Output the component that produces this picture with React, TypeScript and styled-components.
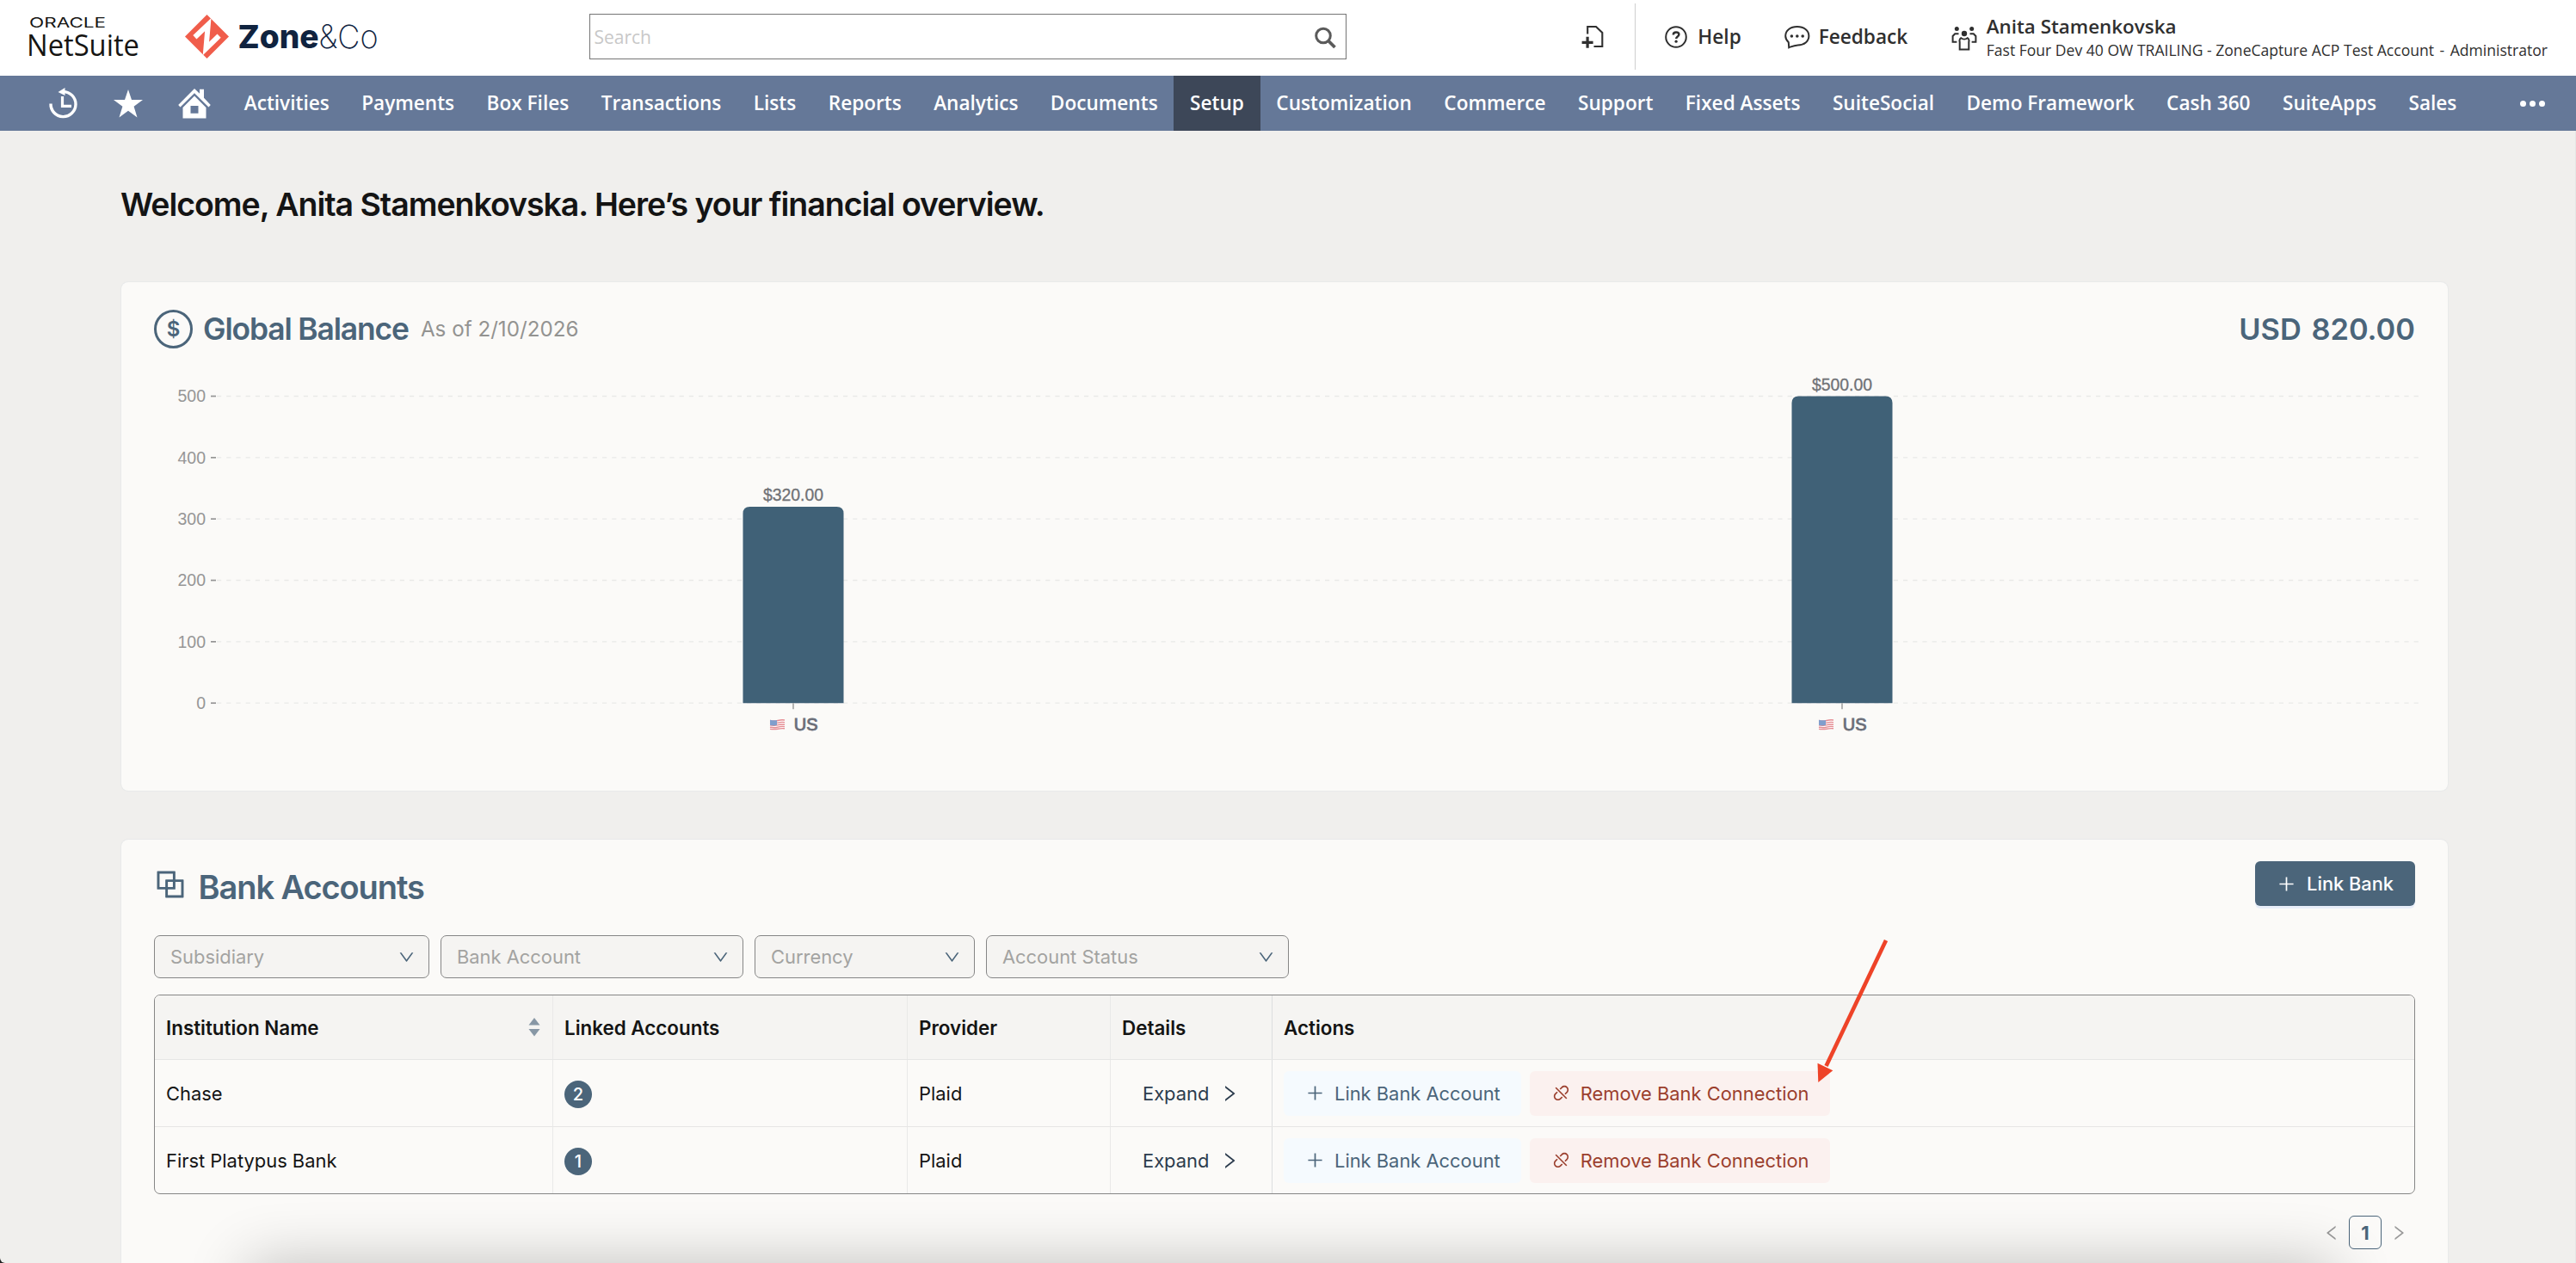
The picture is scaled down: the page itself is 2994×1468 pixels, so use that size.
import styled, { createGlobalStyle } from "styled-components";
import {
  AiOutlineBlock,
  AiOutlineDisconnect,
  AiOutlineDown,
  AiOutlineLeft,
  AiOutlinePlus,
  AiOutlineRight,
} from "react-icons/ai";

const NAV_ITEMS = [
  "Activities",
  "Payments",
  "Box Files",
  "Transactions",
  "Lists",
  "Reports",
  "Analytics",
  "Documents",
  "Setup",
  "Customization",
  "Commerce",
  "Support",
  "Fixed Assets",
  "SuiteSocial",
  "Demo Framework",
  "Cash 360",
  "SuiteApps",
  "Sales",
];

const FILTERS = [
  { label: "Subsidiary", width: 320 },
  { label: "Bank Account", width: 352 },
  { label: "Currency", width: 256 },
  { label: "Account Status", width: 352 },
];

const BALANCES = [
  { country: "US", value: 320 },
  { country: "US", value: 500 },
];

const BANKS = [
  { name: "Chase", accounts: 2, provider: "Plaid" },
  { name: "First Platypus Bank", accounts: 1, provider: "Plaid" },
];

function NetSuiteLogo(): JSX.Element {
  return (
    <svg width="136" height="54" viewBox="0 0 136 54" overflow="visible">
      <text
        x="3"
        y="15.5"
        fontFamily="Inter, sans-serif"
        fontSize="16"
        fontWeight="400"
        textLength="89"
        lengthAdjust="spacingAndGlyphs"
        fill="#161513">
        ORACLE
      </text>
      <text
        x="0"
        y="48.5"
        fontFamily="Open Sans, sans-serif"
        fontSize="35"
        textLength="131"
        lengthAdjust="spacingAndGlyphs"
        fill="#161513">
        NetSuite
      </text>
    </svg>
  );
}

function ZoneLogo(): JSX.Element {
  return (
    <svg width="228" height="54" viewBox="0 0 228 54" overflow="visible">
      <path d="M25.5 1 51 26.5 25.5 52 0 26.5Z" fill="#f05d4b" />
      <path
        d="M11.4 27.2 26.8 12.6 24.4 40.4 39.6 25.6"
        fill="none"
        stroke="#fff"
        strokeWidth="6"
      />
      <text
        x="61.5"
        y="39.5"
        fontFamily="Inter, sans-serif"
        fontSize="37.5"
        fontWeight="800"
        textLength="94"
        lengthAdjust="spacingAndGlyphs"
        fill="#10233f">
        Zone
      </text>
      <text
        x="155.5"
        y="39.5"
        fontFamily="Inter, sans-serif"
        fontSize="37.5"
        fontWeight="200"
        textLength="69"
        lengthAdjust="spacingAndGlyphs"
        fill="#10233f">
        &amp;Co
      </text>
    </svg>
  );
}

function SearchIcon(): JSX.Element {
  return (
    <svg width="26" height="26" viewBox="0 0 26 26" fill="none" stroke="#5a5a5a">
      <circle cx="11" cy="10.5" r="8.3" strokeWidth="3" />
      <path d="m17 16.5 7.5 7.5" strokeWidth="3.8" />
    </svg>
  );
}

function NewRecordIcon(): JSX.Element {
  return (
    <svg width="26" height="28" viewBox="0 0 26 28" fill="none" stroke="#2f2f2f">
      <path d="M7.2 10.5V2H17l7.3 7v16H14.5" strokeWidth="2.1" />
      <path d="M.6 20.3h13M7.1 13.8v13" strokeWidth="3.2" />
    </svg>
  );
}

function HelpIcon(): JSX.Element {
  return (
    <svg width="26" height="26" viewBox="0 0 26 26" fill="none" stroke="#2f2f2f">
      <circle cx="13" cy="13" r="11.8" strokeWidth="2" />
      <path
        d="M9.8 10.4c0-2 1.4-3 3.3-3s3.3 1 3.3 2.7c0 2.6-3.2 2.3-3.2 5"
        strokeWidth="2.5"
      />
      <circle cx="13.1" cy="18.2" r="1.6" fill="#2f2f2f" stroke="none" />
    </svg>
  );
}

function FeedbackIcon(): JSX.Element {
  return (
    <svg width="30" height="28" viewBox="0 0 30 28" fill="none" stroke="#2f2f2f">
      <path
        d="M4.8 20.2C2.4 18 1.2 15.6 1.2 12.8 1.2 6.5 7 2 14.8 2s13.6 4.5 13.600 10.8S23 23.400 15.600 23.400C11.200 23.600 8.500 25 5.200 26.300Z"
        strokeWidth="2"
      />
      <g fill="#2f2f2f" stroke="none">
        <circle cx="8.4" cy="13" r="1.8" />
        <circle cx="14.8" cy="13" r="1.8" />
        <circle cx="21.2" cy="13" r="1.8" />
      </g>
    </svg>
  );
}

function RolesIcon(): JSX.Element {
  return (
    <svg width="30" height="29" viewBox="0 0 30 29" fill="none" stroke="#2f2f2f">
      <g fill="#2f2f2f" stroke="none">
        <circle cx="6.3" cy="3.4" r="2.5" />
        <circle cx="23.7" cy="3.4" r="2.5" />
        <circle cx="15" cy="9" r="3.2" />
      </g>
      <path
        d="M8.5 9.2H4.200L1.600 12v6.800h4.800M21.500 9.200h4.300l2.600 2.800v6.800h-4.800"
        strokeWidth="2"
      />
      <path
        d="M9.7 27.600V18.500c-.6-1.200 0-3.500 1.600-4.300 2 1.600 5.400 1.600 7.400 0 1.600.8 2.200 3.100 1.600 4.300v9.100Z"
        strokeWidth="2"
      />
    </svg>
  );
}

function RecentIcon(): JSX.Element {
  return (
    <svg width="34" height="36" viewBox="0 0 34 36" fill="none" stroke="#fff">
      <path d="M2 18.500A14.500 14.500 0 1 0 16.500 4.600" strokeWidth="3.400" />
      <path d="M10.500 5 18.500 0v9Z" fill="#fff" stroke="none" />
      <path d="M15.500 10v11.300h10.500" strokeWidth="3.200" />
    </svg>
  );
}

function StarIcon(): JSX.Element {
  return (
    <svg width="34" height="33" viewBox="0 0 34 33">
      <path
        d="M17 0l4 12h13L23.6 19.7 27.5 32.5 17 24.8 6.5 32.5l3.9-12.800L0 12h13Z"
        fill="#fff"
      />
    </svg>
  );
}

function HomeIcon(): JSX.Element {
  return (
    <svg width="38" height="35" viewBox="0 0 38 35" fill="#fff">
      <path d="M19 0l6 5.800V.8h5v10L37.800 19l-2.300 2.600L19 5.200 2.500 21.600.2 19Z" />
      <path
        fillRule="evenodd"
        d="M19 8.600 32.500 22v12.500h-27V22ZM14.500 20v8.800h9V20Z"
      />
    </svg>
  );
}

function SortIcon(): JSX.Element {
  return (
    <svg width="14" height="22" viewBox="0 0 14 22" fill="#8797a5">
      <path d="M7 0l6.500 8.500H.5Z" />
      <path d="M7 21.500.5 13h13Z" />
    </svg>
  );
}

// Chart geometry, in the svg's own pixels
const ZERO_Y = 413.2;
const UNIT = 0.7134;
const PLOT_LEFT = 73;
const PLOT_RIGHT = 2632;
const FIRST_BAR = 743;
const BAR_STEP = 1219;
const BAR_WIDTH = 117;

function BalanceChart(): JSX.Element {
  return (
    <ChartSvg width="2640" height="460" viewBox="0 0 2640 460">
      {[0, 100, 200, 300, 400, 500].map((tick) => {
        const y = ZERO_Y - tick * UNIT;
        return (
          <g key={tick}>
            <AxisText x="60" y={y + 6.8} textAnchor="end">
              {tick}
            </AxisText>
            <line x1="66" x2="72" y1={y} y2={y} stroke="#959595" strokeWidth="1.7" />
            <line
              x1={PLOT_LEFT}
              x2={PLOT_RIGHT}
              y1={y}
              y2={y}
              stroke="#e9e9e8"
              strokeWidth="1.3"
              strokeDasharray="5.2 6"
            />
          </g>
        );
      })}
      {BALANCES.map(({ country, value }, i) => {
        const cx = FIRST_BAR + i * BAR_STEP;
        const left = cx - BAR_WIDTH / 2;
        const top = ZERO_Y - value * UNIT;
        return (
          <g key={i}>
            <path
              d={`M${left} ${ZERO_Y}V${top + 8}q0-8 8-8H${left + BAR_WIDTH - 8}q8 0 8 8V${ZERO_Y}Z`}
              fill="#406177"
            />
            <ValueText x={cx} y={top - 6.8} textAnchor="middle">
              ${value.toFixed(2)}
            </ValueText>
            <line
              x1={cx}
              x2={cx}
              y1={ZERO_Y}
              y2={ZERO_Y + 7}
              stroke="#959595"
              strokeWidth="1.4"
            />
            <g transform={`translate(${cx - 27} 432)`} opacity="0.6">
              <path d="M0 .8Q5 2 9 .8T17 .2V11.2Q13 10.8 9 11.6T0 12Z" fill="#fff" />
              <path
                d="M0 1.5Q5 2.6 9 1.5T17 1M0 4.2Q5 5.2 9 4.1T17 3.6M0 6.8Q5 7.8 9 6.7T17 6.2M0 9.2Q5 10.2 9 9.1T17 8.6M0 11.4Q5 12 9 11.2T17 10.8"
                stroke="#d8434f"
                strokeWidth="1.4"
                fill="none"
              />
              <path d="M0 .8Q5 1.8 8 1V7Q4 7.8 0 7Z" fill="#2f62b0" />
            </g>
            <CountryText x={cx + 0.7} y="445.2">
              {country}
            </CountryText>
          </g>
        );
      })}
    </ChartSvg>
  );
}

export default function App(): JSX.Element {
  return (
    <>
      <GlobalStyle />
      <Page>
        <Header>
          <LogoNetSuite>
            <NetSuiteLogo />
          </LogoNetSuite>
          <ZoneLogo />
          <SearchBox>
            <span>Search</span>
            <SearchIcon />
          </SearchBox>
          <HeaderTools>
            <NewRecordIcon />
            <Divider />
            <ToolLink $gap={12}>
              <HelpIcon />
              Help
            </ToolLink>
            <ToolLink $gap={9.5}>
              <FeedbackIcon />
              Feedback
            </ToolLink>
            <User>
              <RolesIcon />
              <div>
                <UserName>Anita Stamenkovska</UserName>
                <UserRole>
                  <span>Fast Four Dev 40 OW TRAILING - ZoneCapture ACP Test Account</span>
                  <span>-</span>
                  <span>Administrator</span>
                </UserRole>
              </div>
            </User>
          </HeaderTools>
        </Header>

        <Navbar>
          <NavIcons>
            <RecentIcon />
            <StarIcon />
            <HomeIcon />
          </NavIcons>
          {NAV_ITEMS.map((item) => (
            <NavItem key={item} $active={item === "Setup"}>
              {item}
            </NavItem>
          ))}
          <NavMore>
            <i />
            <i />
            <i />
          </NavMore>
        </Navbar>

        <Main>
          <Welcome>Welcome, Anita Stamenkovska. Here’s your financial overview.</Welcome>

          <BalanceCard>
            <BalanceHeader>
              <DollarBadge>$</DollarBadge>
              <BalanceTitle>Global Balance</BalanceTitle>
              <AsOf>As of 2/10/2026</AsOf>
              <Total>USD 820.00</Total>
            </BalanceHeader>
            <BalanceChart />
          </BalanceCard>

          <BankCard>
            <BankHeader>
              <AiOutlineBlock size={44} />
              <BankTitle>Bank Accounts</BankTitle>
              <LinkBankButton>
                <AiOutlinePlus size={23} />
                Link Bank
              </LinkBankButton>
            </BankHeader>

            <Filters>
              {FILTERS.map(({ label, width }) => (
                <Select key={label} $width={width}>
                  {label}
                  <AiOutlineDown size={21} />
                </Select>
              ))}
            </Filters>

            <Table>
              <HeadRow>
                <Cell>
                  Institution Name
                  <SortIcon />
                </Cell>
                <Cell>Linked Accounts</Cell>
                <Cell>Provider</Cell>
                <Cell>Details</Cell>
                <Cell>Actions</Cell>
              </HeadRow>
              {BANKS.map(({ name, accounts, provider }) => (
                <Row key={name}>
                  <Cell>{name}</Cell>
                  <Cell>
                    <Count>{accounts}</Count>
                  </Cell>
                  <Cell>{provider}</Cell>
                  <Cell>
                    <ExpandButton>
                      Expand
                      <AiOutlineRight size={24} />
                    </ExpandButton>
                  </Cell>
                  <Cell>
                    <ActionButton>
                      <AiOutlinePlus size={23} />
                      Link Bank Account
                    </ActionButton>
                    <ActionButton $danger>
                      <AiOutlineDisconnect size={23} />
                      Remove Bank Connection
                    </ActionButton>
                  </Cell>
                </Row>
              ))}
            </Table>

            <Pagination>
              <AiOutlineLeft size={22} />
              <PageNumber>1</PageNumber>
              <AiOutlineRight size={22} />
            </Pagination>
          </BankCard>
        </Main>

        <PopupShadow />
        <Arrow width="90" height="176" viewBox="0 0 90 176">
          <path d="M83 5 13.5 151" stroke="#ee4328" strokeWidth="4.6" />
          <path d="M3.5 147.8 21.3 156.3 4.3 170Z" fill="#ee4328" />
        </Arrow>
      </Page>
    </>
  );
}

const GlobalStyle = createGlobalStyle`
  * {
    box-sizing: border-box;
  }

  body {
    margin: 0;
    background: #222;
    font-family: Inter, "Liberation Sans", sans-serif;
  }

  svg {
    display: block;
    flex-shrink: 0;
  }
`;

const Page = styled.div`
  position: relative;
  height: 1468px;
  overflow: hidden;
  background-color: #f0efed;
  border-bottom-left-radius: 6px;
`;

const Header = styled.header`
  display: flex;
  align-items: center;
  height: 88px;
  padding: 0 33px 3px 31px;
  background-color: #fff;
  font-family: "Open Sans", sans-serif;
  color: #2f2f2f;
  white-space: nowrap;
`;

const LogoNetSuite = styled.div`
  width: 184px;
`;

const SearchBox = styled.div`
  display: flex;
  align-items: center;
  justify-content: space-between;
  width: 880px;
  height: 53px;
  margin-left: 242px;
  padding: 0 11px 0 4.5px;
  border: 1.5px solid #757575;
  font-size: 21px;
  color: #c8c8c8;

  svg {
    margin-top: 3px;
  }
`;

const HeaderTools = styled.div`
  display: flex;
  align-items: center;
  margin-left: auto;
`;

const Divider = styled.div`
  width: 1px;
  height: 77px;
  margin: 0 34px 0 36px;
  background-color: #cfcfcf;
`;

const ToolLink = styled.div<{ $gap: number }>`
  display: flex;
  align-items: center;
  gap: ${(props) => props.$gap}px;
  margin-right: 50.5px;
  font-size: 22.6px;
  font-weight: 600;
`;

const User = styled.div`
  display: flex;
  align-items: center;
  gap: 11px;
  padding-top: 3px;
`;

const UserName = styled.div`
  font-size: 22.4px;
  font-weight: 600;
  line-height: 28px;
`;

const UserRole = styled.div`
  display: flex;
  gap: 6.5px;
  font-size: 17.57px;
  line-height: 27px;
`;

const Navbar = styled.nav`
  display: flex;
  height: 64px;
  padding-right: 36px;
  background-color: #657898;
`;

const NavIcons = styled.div`
  display: flex;
  align-items: center;
  gap: 41px;
  width: 265px;
  padding-left: 56.5px;
`;

const NavItem = styled.div<{ $active: boolean }>`
  display: flex;
  align-items: center;
  padding: 0 18.73px 1px;
  font-family: "Open Sans", sans-serif;
  font-size: 22.6px;
  font-weight: 600;
  color: #fff;
  white-space: nowrap;
  background-color: ${(props) => (props.$active ? "#3d4758" : "transparent")};
`;

const NavMore = styled.div`
  display: flex;
  align-items: center;
  gap: 4px;
  margin-left: auto;

  i {
    width: 7px;
    height: 7px;
    border-radius: 50%;
    background-color: #fff;
  }
`;

const Main = styled.main`
  height: 1316px;
  padding: 62px 148px 0 141px;
  border-right: 1px solid #e6e6e5;
`;

const Welcome = styled.h1`
  margin: 0 0 66px -1px;
  font-size: 37.5px;
  font-weight: 600;
  line-height: 48px;
  letter-spacing: -1.04px;
  color: #141414;
`;

const Card = styled.section`
  padding: 0 38px;
  border-radius: 8px;
  background-color: #fbfaf8;
  box-shadow: 0 0 2px rgba(60, 110, 160, 0.12);
`;

const BalanceCard = styled(Card)`
  height: 591px;
  padding-top: 32px;
`;

const BankCard = styled(Card)`
  height: 560px;
  margin-top: 57px;
  padding-top: 25px;
`;

const BalanceHeader = styled.div`
  display: flex;
  align-items: center;
  height: 44px;
  color: #4b657a;
`;

const DollarBadge = styled.div`
  display: flex;
  align-items: center;
  justify-content: center;
  width: 45px;
  height: 45px;
  border: 3px solid #4b657a;
  border-radius: 50%;
  font-size: 24px;
  font-weight: 600;
`;

const BalanceTitle = styled.h2`
  margin: 0 14px 0 12px;
  font-size: 35.4px;
  font-weight: 600;
  letter-spacing: -1.13px;
`;

const AsOf = styled.span`
  font-size: 24.2px;
  color: #939391;
`;

const Total = styled.div`
  margin-left: auto;
  font-size: 34.4px;
  font-weight: 600;
  word-spacing: 3px;
`;

const ChartSvg = styled.svg`
  overflow: visible;
  font-family: "Liberation Sans", Arial, sans-serif;
`;

const AxisText = styled.text`
  font-size: 19.5px;
  fill: #969696;
`;

const ValueText = styled.text`
  font-size: 19.4px;
  fill: #707276;
  stroke: #707276;
  stroke-width: 0.3px;
`;

const CountryText = styled.text`
  font-size: 20px;
  fill: #6b6f7a;
  stroke: #6b6f7a;
  stroke-width: 0.9px;
`;

const BankHeader = styled.div`
  display: flex;
  align-items: center;
  height: 52px;
  color: #4b657a;

  > svg {
    margin: 1px 0 0 -3px;
  }
`;

const BankTitle = styled.h2`
  margin: 8px 0 0 10.5px;
  font-size: 38px;
  font-weight: 600;
  letter-spacing: -1.08px;
`;

const LinkBankButton = styled.div`
  display: flex;
  align-items: center;
  gap: 12.5px;
  height: 52px;
  margin-left: auto;
  padding: 0 25px;
  border-radius: 6px;
  background-color: #4b657a;
  box-shadow: 0 3px 0 #e8eef9;
  font-size: 21.8px;
  font-weight: 500;
  color: #fff;
`;

const Filters = styled.div`
  display: flex;
  gap: 13px;
  margin: 34px 0 19px;
`;

const Select = styled.div<{ $width: number }>`
  display: flex;
  align-items: center;
  justify-content: space-between;
  width: ${(props) => props.$width}px;
  height: 50px;
  padding: 0 15.5px 0 18px;
  border: 1px solid #868686;
  border-radius: 7px;
  background-color: #f5f4f2;
  font-size: 21.9px;
  color: #a3a3a1;

  svg {
    color: #4b657a;
  }
`;

const Table = styled.div`
  border: 1px solid #868686;
  border-radius: 7px;
  overflow: hidden;
  font-size: 21.9px;
  color: #141414;
`;

const Row = styled.div`
  display: grid;
  grid-template-columns: 463px 412px 236px 188px 1fr;
  height: 78px;
  border-bottom: 1px solid #e6e6e5;

  &:last-child {
    height: 77px;
    border-bottom: none;
  }
`;

const HeadRow = styled(Row)`
  height: 75px;
  background-color: #f5f4f2;
  font-size: 22.4px;
  font-weight: 600;
`;

const Cell = styled.div`
  display: flex;
  align-items: center;
  padding: 0 13px;
  border-right: 1px solid #e9e9e8;

  &:nth-child(4) {
    border-right-color: #dcdedf;
  }

  &:last-child {
    gap: 10px;
    border-right: none;
  }

  > svg {
    margin: 0 1.5px 0 auto;
  }
`;

const Count = styled.span`
  display: flex;
  align-items: center;
  justify-content: center;
  width: 32px;
  height: 32px;
  margin-top: 2px;
  border-radius: 50%;
  background-color: #4b657a;
  font-size: 20px;
  font-weight: 500;
  color: #fff;
`;

const ExpandButton = styled.div`
  display: flex;
  align-items: center;
  gap: 12px;
  padding-left: 24px;
  color: #2c3c4d;
`;

const ActionButton = styled.div<{ $danger?: boolean }>`
  display: flex;
  align-items: center;
  gap: 11px;
  height: 52px;
  padding: 0 24px 0 25px;
  border-radius: 6px;
  background-color: ${(props) => (props.$danger ? "#fbf1ef" : "#f5fafe")};
  color: ${(props) => (props.$danger ? "#9b3f2d" : "#4b657a")};
`;

const Pagination = styled.div`
  display: flex;
  align-items: center;
  justify-content: flex-end;
  gap: 9px;
  margin-top: 25px;
  padding-right: 8px;
  color: #999;
`;

const PageNumber = styled.div`
  display: flex;
  align-items: center;
  justify-content: center;
  width: 38px;
  height: 39px;
  border: 1.5px solid #4b657a;
  border-radius: 6px;
  font-size: 22px;
  font-weight: 700;
  color: #4b657a;
`;

/* Soft shadow cast by the popup docked under the page */
const PopupShadow = styled.div`
  position: absolute;
  top: 100%;
  left: 288px;
  right: 282px;
  height: 200px;
  box-shadow: 0 0 70px rgba(0, 0, 0, 0.24);
`;

const Arrow = styled.svg`
  position: absolute;
  top: 1088px;
  left: 2109px;
`;
